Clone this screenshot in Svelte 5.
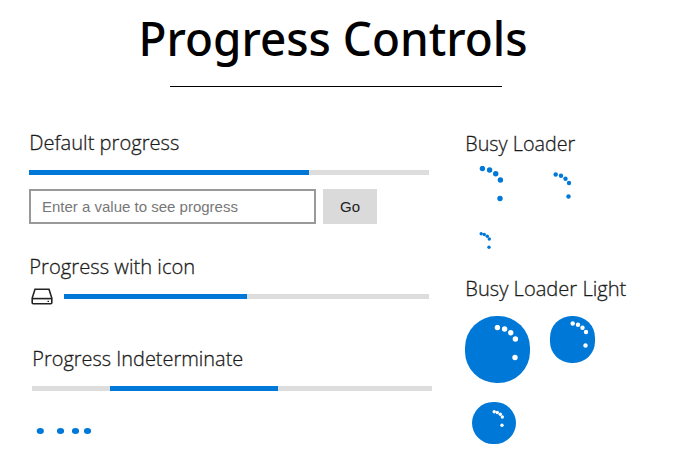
<script>
  const large = [[17.4, 2.5], [24.6, 4], [30.7, 7.7], [35.4, 14], [35, 32.5]];
  const medium = [[13.7, 2.5], [19, 3.8], [23.5, 6.7], [27, 11], [26.5, 24.5]];
  const small = [[9.2, 1.8], [12.3, 2.5], [15.3, 4.3], [17.3, 7], [17, 15.3]];
</script>

{#snippet label(text, width, height = 30)}
  <svg class="label" width={width + 4} {height} role="heading" aria-level="2">
    <text x="1.3" y="21" textLength={width} lengthAdjust="spacingAndGlyphs">{text}</text>
  </svg>
{/snippet}

{#snippet dots(points, r, width, height)}
  <svg class="dots" {width} {height} aria-hidden="true">
    {#each points as [x, y]}
      <circle cx={x} cy={y} {r} />
    {/each}
  </svg>
{/snippet}

<main>
  <header>
    <svg width="400" height="86" role="heading" aria-level="1">
      <text x="0.5" y="56" textLength="389" lengthAdjust="spacingAndGlyphs">Progress Controls</text>
    </svg>
    <div class="rule"></div>
  </header>

  <div class="columns">
    <div class="left">
      <section class="default">
        {@render label('Default progress', 150)}
        <div class="track"><div class="fill" style="width: 280px"></div></div>
        <div class="form">
          <input type="text" placeholder="Enter a value to see progress" />
          <button>Go</button>
        </div>
      </section>

      <section class="with-icon">
        {@render label('Progress with icon', 166)}
        <div class="icon-row">
          <svg width="22" height="17" viewBox="0 0 22 17" fill="none" stroke="#222" stroke-width="1.6">
            <path d="M4 1.2H18L20.8 10V14.8Q20.8 15.8 19.8 15.8H2.2Q1.2 15.8 1.2 14.8V10Z" />
            <path d="M1.2 10.6H20.8" />
            <path d="M16.5 13.3H18" stroke-width="1.2" />
          </svg>
          <div class="track"><div class="fill" style="width: 183px"></div></div>
        </div>
      </section>

      <section class="indeterminate">
        {@render label('Progress Indeterminate', 211)}
        <div class="track"><div class="fill" style="width: 168px"></div></div>
        <svg class="dots" width="70" height="10" aria-hidden="true">
          {#each [8.3, 28.5, 43.5, 55.5] as x}
            <ellipse cx={x} cy="5" rx="3.6" ry="3" />
          {/each}
        </svg>
      </section>
    </div>

    <div class="right">
      {@render label('Busy Loader', 110)}
      <div class="loaders">
        {@render dots(large, 2.7, 60, 52)}
        <div class="mid">{@render dots(medium, 2.2, 40, 40)}</div>
      </div>
      <div class="tiny">{@render dots(small, 1.7, 30, 24)}</div>

      {@render label('Busy Loader Light', 161)}
      <div class="lights">
        <div class="disc big">{@render dots(large, 2.7, 50, 50)}</div>
        <div class="disc mid-disc">{@render dots(medium, 2.2, 36, 40)}</div>
      </div>
      <div class="disc small-disc">{@render dots(small, 1.7, 30, 24)}</div>
    </div>
  </div>
</main>

<style>
  :global(body) { margin: 0; background: #fff; }
  main { width: 675px; height: 475px; overflow: hidden; font-family: "Open Sans", "Noto Sans", sans-serif; }
  svg { display: block; flex: none; }
  header { height: 129px; }
  header svg { margin-left: 138px; overflow: visible; }
  header text { font-family: "Noto Sans", "Open Sans", sans-serif; font-size: 47.5px; font-weight: 500; fill: #000; }
  .rule { width: 332px; height: 1px; margin-left: 170px; background: #000; }
  .columns { display: flex; }
  .left { width: 436px; padding-left: 29px; box-sizing: border-box; }
  .right { padding: 1px 0 0 29px; }
  .label { margin-left: -1px; overflow: visible; }
  .label text { font-size: 20.8px; font-weight: 300; fill: #1a1a1a; stroke: #1a1a1a; stroke-width: 0.3px; }
  .track { width: 400px; height: 5px; background: #ddd; }
  .fill { height: 5px; background: #0078d7; }
  .default { height: 124px; }
  .default .track { margin-top: 11px; }
  .form { display: flex; gap: 7px; margin-top: 14px; }
  input { width: 287px; height: 35px; box-sizing: border-box; border: 2px solid #999; padding: 0 11px; margin: 0; font: 15px "Liberation Sans", Arial, sans-serif; outline: none; }
  input::placeholder { color: #777; opacity: 1; }
  button { width: 54px; height: 35px; border: 0; padding: 0; background: #dadada; color: #222; font: 15px "Liberation Sans", Arial, sans-serif; }
  .with-icon { height: 92px; }
  .icon-row { display: flex; align-items: center; padding: 5px 0 0 2px; }
  .icon-row .track { width: 365px; margin-left: 11px; }
  .indeterminate { padding-left: 3px; }
  .indeterminate .track { display: flex; margin-top: 11px; }
  .indeterminate .fill { margin-left: 78.3px; }
  .indeterminate .dots { margin-top: 35px; }
  .dots { fill: #0078d7; }
  .disc .dots { fill: #fff; }
  .loaders { display: flex; height: 66px; padding-top: 6px; box-sizing: border-box; }
  .mid { padding: 6px 0 0 17px; }
  .tiny { height: 49px; padding: 6px 0 0 7px; box-sizing: border-box; }
  .lights { display: flex; height: 97px; padding-top: 11px; box-sizing: border-box; gap: 20px; }
  .disc { background: #0078d7; box-sizing: border-box; overflow: hidden; }
  .big { width: 65px; height: 67px; padding: 9px 0 0 15px; border-radius: 31.5px; }
  .mid-disc { width: 45px; height: 47px; padding: 5px 0 0 9px; border-radius: 21.5px; }
  .small-disc { width: 44px; height: 42px; margin-left: 7px; padding: 8px 0 0 13px; border-radius: 21px; }
</style>
